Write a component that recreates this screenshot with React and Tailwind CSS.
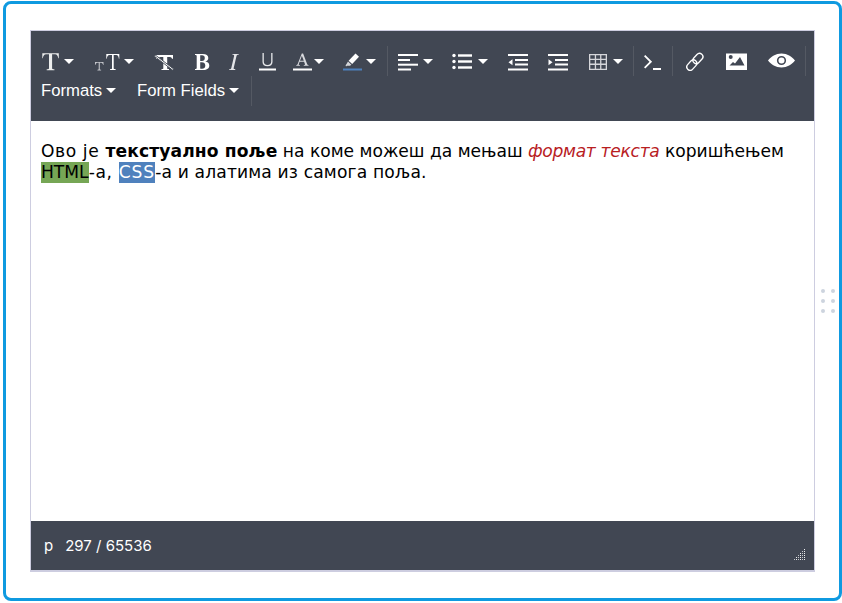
const Caret = () => (
  <svg width="10" height="5" viewBox="0 0 10 5" className="block shrink-0"><path d="M0 0h10L5 5z" fill="#fff" /></svg>
);

const I = ({ w, h = 20, children }) => (
  <svg width={w} height={h} viewBox={`0 0 ${w} ${h}`} className="block shrink-0" fill="#fff">{children}</svg>
);

const Btn = ({ w, gap = "", caret, children }) => (
  <div className={`flex items-center shrink-0 h-[30px] ${w} ${gap}`}>
    {children}
    {caret && <Caret />}
  </div>
);

const Div = () => <div className="w-px h-[30px] bg-[#545963] shrink-0" />;

const TIcon = () => (
  <I w={19}>
    <path transform="translate(0.8 0)" fill="#eceded" d="M.5 2.300h16.500v5h-.5c-.4-2.300-1.200-4-3.300-4h-2.900v14c0 .7.6.9 2.300 1v.9H4.900v-.9c1.700-.1 2.300-.3 2.300-1v-14H4.300c-2.100 0-2.900 1.700-3.300 4H.5z" />
  </I>
);

const SizeIcon = () => (
  <I w={26}>
    <path d="M1 11h8.500v3h-.4c-.3-1.200-.8-2.200-1.900-2.200H5.800v6.200c0 .5.4.7 1.300.7v.8H3.400v-.8c.9 0 1.300-.2 1.300-.7v-6.200H3.300c-1.100 0-1.600 1-1.900 2.200H1z" fill="#c4c6cb" />
    <path d="M12.300 3h13v4.800h-.4c-.3-2.200-1-3.700-2.700-3.700h-2.500v13.100c0 .6.500.8 1.900.9v.8h-5.500v-.8c1.400-.1 1.900-.3 1.900-.9V4.100h-2.500c-1.700 0-2.400 1.500-2.700 3.700h-.5z" />
  </I>
);

const ClearIcon = () => (
  <I w={21}>
    <path d="M2 4h17v3.800h-1c-.3-1-.9-1.800-2-1.800h-2.800v11.200c0 .6.5.8 1.800.9V19H7.500v-.9c1.300-.1 1.800-.3 1.800-.9V6H6.500c-1.100 0-1.700.8-2 1.800H2z" />
    <path d="M.3 5.200l1-1.200L19.700 18l-1 1.200z" stroke="#414753" strokeWidth="0.9" />
  </I>
);

const BoldIcon = () => (
  <I w={15}>
    <path fillRule="evenodd" d="M0 3h7.800c3.500 0 5.500 1.500 5.500 4 0 1.800-1.100 3-3 3.500 2.600.4 4 1.800 4 4 0 2.900-2.300 4.500-6 4.500H0v-.9c1.200-.1 1.700-.3 1.700-1V4.900c0-.7-.5-.9-1.700-1zM5.200 4.200v5.700h1.700c1.900 0 2.900-1 2.900-2.900 0-1.900-1-2.800-2.800-2.800zm0 7v6c0 .4.500.6 1.800.6 2.100 0 3.300-1.100 3.300-3.200 0-2.200-1.300-3.400-3.500-3.400z" />
  </I>
);

const ItalicIcon = () => (
  <I w={10}>
    <path d="M3.500 3h6.300l-.2.8c-1.400.1-1.800.3-2.100 1.300L4.700 17c-.2.900.2 1.100 1.700 1.200l-.2.800H0l.2-.8c1.400-.1 1.800-.3 2.100-1.300L5.100 5c.2-.9-.2-1.100-1.700-1.200z" fill="#e4e5e8" />
  </I>
);

const UIcon = () => (
  <I w={17}>
    <path d="M3.500 2h1.300v8.800c0 2 1.300 3.100 3.700 3.100s3.700-1.100 3.700-3.100V2h1.300v8.900c0 2.800-1.900 4.300-5 4.300s-5-1.500-5-4.300z" fill="#e8e9eb" />
    <rect x="0" y="17.500" width="17" height="2" />
  </I>
);

const AIcon = () => (
  <I w={19}>
    <path fillRule="evenodd" d="M8.800 2.500h1.300l4 10.500c.3.700.7.900 1.400 1v.7h-4.700V14c1.100-.1 1.400-.3 1.100-1l-.8-2.200H6.600l-.8 2.200c-.3.700 0 .9 1.100 1v.7H3.300V14c.7-.1 1.100-.3 1.400-1zM7 9.800h3.800L8.900 4.700z" fill="#d9dade" />
    <rect x="0" y="17.500" width="19" height="2" />
  </I>
);

const PenIcon = () => (
  <I w={19}>
    <path d="M12.500 2.500l3.500 3.200-6.800 7.300-3.600-3.300z" />
    <path d="M5 10.500l3.400 3.200-1.400 1.100-3-.1-1 .7-.4-1.200.9-1.200z" fill="#d4d6da" />
    <rect x="0" y="17.500" width="19" height="2" fill="#4f81bd" />
  </I>
);

const AlignIcon = () => (
  <I w={20}>
    <rect y="3" width="20" height="2" /><rect y="8" width="12" height="2" /><rect y="12.700" width="20" height="2" /><rect y="17.500" width="13" height="2" />
  </I>
);

const ListIcon = () => (
  <I w={20}>
    <circle cx="2" cy="4.500" r="1.700" /><circle cx="2" cy="10.500" r="1.700" /><circle cx="2" cy="16.500" r="1.700" />
    <rect x="6" y="3.300" width="14" height="2.400" /><rect x="6" y="9.300" width="14" height="2.400" /><rect x="6" y="15.300" width="14" height="2.400" />
  </I>
);

const OutdentIcon = () => (
  <I w={20}>
    <rect y="3" width="20" height="2" /><rect x="7" y="8" width="13" height="2" /><rect x="7" y="12.500" width="13" height="2" /><rect y="17.500" width="20" height="2" />
    <path d="M4.500 8.300v6l-4-3z" />
  </I>
);

const IndentIcon = () => (
  <I w={20}>
    <rect y="3" width="20" height="2" /><rect x="7" y="8" width="13" height="2" /><rect x="7" y="12.500" width="13" height="2" /><rect y="17.500" width="20" height="2" />
    <path d="M.5 8.300v6l4-3z" />
  </I>
);

const TableIcon = () => (
  <I w={18}>
    <path fillRule="evenodd" fill="#d6d7db" d="M0 3h18v16H0zm1.300 1.300v3.500h4.500V4.300zm5.800 0v3.500h4V4.300zm5.300 0v3.500h4.300V4.300zM1.300 9.100v3.500h4.500V9.100zm5.800 0v3.500h4V9.100zm5.300 0v3.500h4.300V9.100zM1.300 13.900v3.800h4.500v-3.800zm5.800 0v3.800h4v-3.800zm5.300 0v3.800h4.300v-3.800z" />
  </I>
);

const CodeIcon = () => (
  <I w={18}>
    <path d="M1.300 4L0 5.300 5.500 10.800 0 16.300l1.300 1.300 6.800-6.800z" />
    <rect x="9" y="17" width="8" height="2" />
  </I>
);

const LinkIcon = () => (
  <I w={18}>
    <g fill="none" stroke="#fff" strokeWidth="1.300">
      <rect x="-5.800" y="-3.400" width="11.600" height="6.800" rx="3.400" transform="translate(5.800 14.100) rotate(-48)" />
      <rect x="-5.800" y="-3.400" width="11.600" height="6.800" rx="3.400" transform="translate(11.900 7.500) rotate(-48)" />
    </g>
  </I>
);

const ImageIcon = () => (
  <I w={21}>
    <path fillRule="evenodd" d="M0 2.500h21V19H0zM4.700 4a2 2 0 100 4 2 2 0 000-4zM3.500 14.500L7 11l2 1.500L14 6l4.500 8.500z" />
  </I>
);

const EyeIcon = () => (
  <I w={27}>
    <path fillRule="evenodd" d="M13.500 2.500c5.700 0 10.300 3.200 13.500 7-3.200 3.800-7.800 7-13.500 7S3.200 13.300 0 9.500c3.200-3.800 7.800-7 13.500-7zm0 2.400a4.600 4.600 0 100 9.200 4.600 4.600 0 000-9.200z" />
    <circle cx="13.500" cy="9.500" r="3" />
  </I>
);

const Grip = () => (
  <svg width="12" height="12" viewBox="0 0 12 12" className="block" fill="#fff">
    {[[10,0],[8,2],[10,2],[6,4],[8,4],[10,4],[4,6],[6,6],[8,6],[10,6],[2,8],[4,8],[6,8],[8,8],[10,8],[0,10],[2,10],[4,10],[6,10],[8,10],[10,10]].map(([x,y],i)=>(
      <rect key={i} x={x} y={y} width="1" height="1" opacity={x%4===2?0.9:0.7} />
    ))}
  </svg>
);

export default function App() {
  return (
    <div className="w-[842px] h-[603px] bg-white pl-[3px] pt-px overflow-hidden">
      <div className="relative w-[839px] h-[600px] border-[3px] border-[#0f9ae0] rounded-[8px] pl-[24px] pt-[26px] bg-white">
        <div className="w-[785px] h-[542px] flex flex-col border border-b-2 border-[#cdcde0] bg-white">
          <div className="h-[90px] bg-[#414753] pt-[15px] pl-[10px] shrink-0 text-white font-['Liberation_Sans',Arial,sans-serif]">
            <div className="flex items-center h-[30px]">
              <Btn w="w-[53px]" gap="gap-[4px]" caret><TIcon /></Btn>
              <Btn w="w-[60px]" gap="gap-[4px]" caret><SizeIcon /></Btn>
              <Btn w="w-[41px]"><ClearIcon /></Btn>
              <Btn w="w-[34px]"><BoldIcon /></Btn>
              <Btn w="w-[30px]"><ItalicIcon /></Btn>
              <Btn w="w-[34px]"><UIcon /></Btn>
              <Btn w="w-[50px]" gap="gap-[2px]" caret><AIcon /></Btn>
              <Btn w="w-[44px]" gap="gap-[4px]" caret><PenIcon /></Btn>
              <Div />
              <div className="w-[10px]" />
              <Btn w="w-[54px]" gap="gap-[5px]" caret><AlignIcon /></Btn>
              <Btn w="w-[56px]" gap="gap-[6px]" caret><ListIcon /></Btn>
              <Btn w="w-[40px]"><OutdentIcon /></Btn>
              <Btn w="w-[41px]"><IndentIcon /></Btn>
              <Btn w="w-[44px]" gap="gap-[6px]" caret><TableIcon /></Btn>
              <Div />
              <div className="w-[10px]" />
              <Btn w="w-[28px]"><CodeIcon /></Btn>
              <Div />
              <div className="w-[13px]" />
              <Btn w="w-[40px]"><LinkIcon /></Btn>
              <Btn w="w-[42px]"><ImageIcon /></Btn>
              <Btn w="w-[37px]"><EyeIcon /></Btn>
              <Div />
            </div>
            <div className="flex items-center h-[30px] text-[16.7px]">
              <div className="flex items-center gap-[4px] w-[96px]"><span>Formats</span><Caret /></div>
              <div className="flex items-center gap-[4px] w-[114px]"><span>Form Fields</span><Caret /></div>
              <Div />
            </div>
          </div>
          <div className="flex-1 pt-[20px] pl-[10px] text-[17.13px] leading-[21px] text-black font-['DejaVu_Sans',Verdana,sans-serif]">
            <p>
              <span className="tracking-[0.6px]">Ово је </span>
              <strong className="font-bold tracking-[0.13px]">текстуално поље</strong>
              <span className="tracking-[-0.01px]"> на коме можеш да мењаш </span>
              <em className="text-[#b8201f] italic tracking-[-0.3px]">формат текста</em> коришћењем{" "}
              <span className="bg-[#76a655] pb-px">HTML</span>
              <span className="tracking-[0.65px]">-а, </span>
              <span className="bg-[#4f81bd] text-white pb-px tracking-[0.9px]">CSS</span>
              <span className="tracking-[0.15px]">-а и алатима из самога поља.</span>
            </p>
          </div>
          <div className="h-[49px] bg-[#414753] shrink-0 flex items-center justify-between pl-[13px] pr-[8px] text-white text-[15px] font-['Inter','Roboto',sans-serif]">
            <div className="flex items-center gap-[12px] pt-[2px]"><span>p</span><span>297 / 65536</span></div>
            <div className="self-end pb-[9px]"><Grip /></div>
          </div>
        </div>
        <div className="absolute left-[815px] top-[285px] grid grid-cols-2 gap-x-[6px] gap-y-[6px]">
          {[0,1,2,3,4,5].map((i) => <span key={i} className="block w-[4px] h-[4px] rounded-full bg-[#cdd4de]" />)}
        </div>
      </div>
    </div>
  );
}
